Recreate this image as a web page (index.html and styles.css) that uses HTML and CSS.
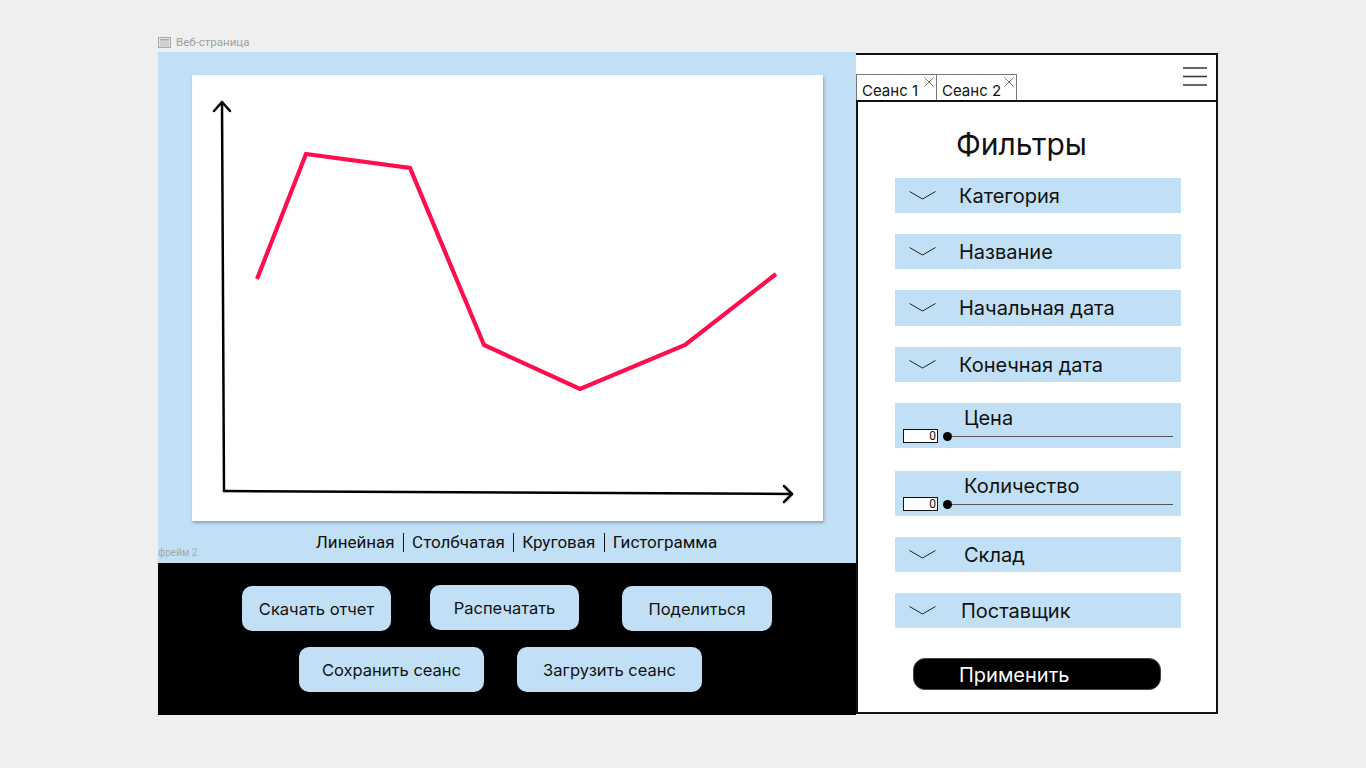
FILE: index.html
```html
<!DOCTYPE html>
<html lang="ru">
<head>
<meta charset="utf-8">
<title>Веб-страница</title>
<link rel="stylesheet" href="styles.css">
</head>
<body>
<div class="canvas">
  <div class="page-label">
    <svg class="page-icon" width="13" height="11" viewBox="0 0 13 11"><rect x="0.5" y="0.5" width="12" height="10" fill="#e4e4e4" stroke="#a8a8a8"/><rect x="2" y="2" width="9" height="1.5" fill="#a8a8a8"/><rect x="2" y="4.5" width="9" height="1" fill="#bdbdbd"/><rect x="2" y="6.5" width="9" height="1" fill="#bdbdbd"/><rect x="2" y="8.3" width="9" height="1" fill="#bdbdbd"/></svg>
    <span>Веб-страница</span>
  </div>
  <div class="layout">
    <div class="frame">
      <div class="chart-area">
        <div class="chart-card">
          <svg class="chart" width="631" height="446" viewBox="0 0 631 446">
            <g fill="none" stroke="#000" stroke-width="2.5" stroke-linecap="round" stroke-linejoin="round">
              <path d="M30 27 L32 416"/>
              <path d="M22 36 L30 27 L38 36"/>
              <path d="M32 416 L600 419"/>
              <path d="M592 411 L600 419 L592 427"/>
            </g>
            <polyline points="65,204 114,79 218,93 292,270 388,314 493,270 584,199" fill="none" stroke="#ff0d4d" stroke-width="4.2" stroke-linejoin="miter"/>
          </svg>
        </div>
        <div class="chart-caption">
          <span class="frame-name">фрейм 2</span>
          <span class="chart-types">Линейная <span class="sep"></span> Столбчатая <span class="sep"></span> Круговая <span class="sep"></span> Гистограмма</span>
        </div>
      </div>
      <div class="actions">
        <div class="actions-row row-one">
          <button class="btn">Скачать отчет</button>
          <button class="btn btn-up">Распечатать</button>
          <button class="btn btn-share">Поделиться</button>
        </div>
        <div class="actions-row row-two">
          <button class="btn btn-wide">Сохранить сеанс</button>
          <button class="btn btn-wide">Загрузить сеанс</button>
        </div>
      </div>
    </div>
    <div class="side">
      <div class="side-head">
        <div class="tabs">
          <div class="tab"><span>Сеанс 1</span><svg class="tab-close" width="10" height="10" viewBox="0 0 10 10"><path d="M0.5 0.5 L9.5 9.5 M9.5 0.5 L0.5 9.5" stroke="#777" stroke-width="1"/></svg></div>
          <div class="tab"><span>Сеанс 2</span><svg class="tab-close" width="10" height="10" viewBox="0 0 10 10"><path d="M0.5 0.5 L9.5 9.5 M9.5 0.5 L0.5 9.5" stroke="#777" stroke-width="1"/></svg></div>
        </div>
        <svg class="burger" width="24" height="20" viewBox="0 0 24 20"><path d="M0 2 H24 M0 10.5 H24 M0 19 H24" stroke="#333" stroke-width="1.5"/></svg>
      </div>
      <div class="filters">
        <h1 class="filters-title">Фильтры</h1>
        <div class="filter-list">
          <div class="filter"><svg class="chev" width="27" height="9" viewBox="0 0 27 9"><path d="M0.5 0.5 L13.5 8 L26.5 0.5" fill="none" stroke="#222" stroke-width="1"/></svg><span>Категория</span></div>
          <div class="filter"><svg class="chev" width="27" height="9" viewBox="0 0 27 9"><path d="M0.5 0.5 L13.5 8 L26.5 0.5" fill="none" stroke="#222" stroke-width="1"/></svg><span>Название</span></div>
          <div class="filter filter-tall"><svg class="chev" width="27" height="9" viewBox="0 0 27 9"><path d="M0.5 0.5 L13.5 8 L26.5 0.5" fill="none" stroke="#222" stroke-width="1"/></svg><span>Начальная дата</span></div>
          <div class="filter"><svg class="chev" width="27" height="9" viewBox="0 0 27 9"><path d="M0.5 0.5 L13.5 8 L26.5 0.5" fill="none" stroke="#222" stroke-width="1"/></svg><span>Конечная дата</span></div>
          <div class="range">
            <span class="range-label">Цена</span>
            <div class="range-control"><span class="range-input">0</span><span class="range-track"><span class="range-dot"></span></span></div>
          </div>
          <div class="range range-second">
            <span class="range-label">Количество</span>
            <div class="range-control"><span class="range-input">0</span><span class="range-track"><span class="range-dot"></span></span></div>
          </div>
          <div class="filter"><svg class="chev" width="27" height="9" viewBox="0 0 27 9"><path d="M0.5 0.5 L13.5 8 L26.5 0.5" fill="none" stroke="#222" stroke-width="1"/></svg><span class="shift">Склад</span></div>
          <div class="filter"><svg class="chev" width="27" height="9" viewBox="0 0 27 9"><path d="M0.5 0.5 L13.5 8 L26.5 0.5" fill="none" stroke="#222" stroke-width="1"/></svg><span class="shift-sm">Поставщик</span></div>
        </div>
        <button class="apply">Применить</button>
      </div>
    </div>
  </div>
</div>
</body>
</html>
```

FILE: styles.css
```css
* { box-sizing: border-box; }
html, body { margin: 0; padding: 0; }
body {
  background: #efefef;
  width: 1366px;
  height: 768px;
  overflow: hidden;
  font-family: Inter, "Noto Sans", sans-serif;
}
.canvas {
  padding: 34px 0 0 158px;
}
.page-label {
  height: 18px;
  display: flex;
  align-items: center;
  gap: 5px;
  color: #a0a0a0;
  font-family: Roboto, sans-serif;
  font-size: 11.5px;
  padding-bottom: 2px;
}
.page-icon { display: block; }
.layout {
  display: flex;
  align-items: flex-start;
}
.frame {
  width: 698px;
  display: flex;
  flex-direction: column;
}
.chart-area {
  background: #c2e0f5;
  height: 511px;
  padding: 23px 33px 0 34px;
  display: flex;
  flex-direction: column;
}
.chart-card {
  width: 631px;
  height: 446px;
  background: #fff;
  box-shadow: 1px 2px 3px rgba(0, 0, 0, 0.28);
}
.chart { display: block; }
.chart-caption {
  position: relative;
  flex: 1;
  display: flex;
  align-items: center;
  justify-content: center;
  padding-left: 18px;
}
.chart-types {
  font-family: Roboto, sans-serif;
  font-size: 17px;
  color: #111;
  display: flex;
  align-items: center;
  gap: 4px;
  white-space: pre;
}
.sep {
  display: inline-block;
  width: 1px;
  height: 19px;
  background: #111;
}
.frame-name {
  position: absolute;
  left: -34px;
  top: 26px;
  font-family: Roboto, sans-serif;
  font-size: 10px;
  color: #a7a7a7;
}
.actions {
  background: #000;
  height: 152px;
  padding-top: 23px;
  display: flex;
  flex-direction: column;
  gap: 16px;
}
.actions-row {
  display: flex;
  justify-content: center;
}
.row-one { gap: 39px; }
.row-two { gap: 33px; padding-right: 13px; }
.btn {
  width: 149px;
  height: 45px;
  border: none;
  border-radius: 10px;
  background: #c2e0f5;
  color: #111;
  font-family: Inter, sans-serif;
  font-size: 16.5px;
  padding: 0;
}
.btn-up { position: relative; top: -1px; }
.btn-share { width: 150px; margin-left: 4px; }
.btn-wide { width: 185px; }
.side {
  width: 362px;
  margin-top: 1px;
  display: flex;
  flex-direction: column;
}
.side-head {
  height: 47px;
  background: #fff;
  border-top: 2px solid #111;
  border-right: 2px solid #111;
  display: flex;
  align-items: flex-end;
  justify-content: space-between;
  position: relative;
}
.tabs {
  display: flex;
}
.tab {
  position: relative;
  width: 81px;
  height: 26px;
  border: 1px solid #777;
  border-bottom: none;
  margin-right: -1px;
  font-size: 15px;
  color: #111;
  padding: 7px 0 0 5px;
  line-height: 18px;
}
.tab-close {
  position: absolute;
  right: 2px;
  top: 2px;
}
.burger {
  position: absolute;
  right: 9px;
  top: 11px;
}
.filters {
  height: 614px;
  border: 2px solid #111;
  background: #fff;
  padding-top: 26px;
}
.filters-title {
  margin: 0 0 17px 98px;
  font-weight: 400;
  font-size: 30px;
  line-height: 33px;
  color: #111;
}
.filter-list {
  margin-left: 37px;
  width: 286px;
  display: flex;
  flex-direction: column;
  gap: 21px;
}
.filter {
  height: 35px;
  background: #c2e0f5;
  display: flex;
  align-items: center;
  padding-left: 14px;
  font-size: 20px;
  color: #111;
}
.filter-tall { height: 36px; }
.chev {
  display: block;
  margin-right: 23px;
  margin-top: -1px;
}
.shift { margin-left: 5px; }
.shift-sm { margin-left: 2px; }
.range {
  height: 45px;
  background: #c2e0f5;
  padding: 3px 8px 0 8px;
  color: #111;
}
.range-second { margin-top: 2px; }
.range-label {
  display: block;
  margin-left: 61px;
  font-size: 20px;
  line-height: 24px;
}
.range-control {
  display: flex;
  align-items: center;
  margin-top: -1px;
}
.range-input {
  width: 35px;
  height: 14px;
  border: 1px solid #111;
  background: #fff;
  font-family: Roboto, sans-serif;
  font-size: 12px;
  line-height: 12px;
  text-align: right;
  padding-right: 1px;
}
.range-track {
  position: relative;
  flex: 1;
  height: 1px;
  background: #555;
  margin-left: 10px;
}
.range-dot {
  position: absolute;
  left: -5px;
  top: -4px;
  width: 9px;
  height: 9px;
  border-radius: 50%;
  background: #000;
}
.apply {
  display: block;
  margin: 30px 0 0 55px;
  width: 248px;
  height: 32px;
  background: #000;
  color: #fff;
  border: 1px solid #444;
  border-radius: 12px;
  font-family: Inter, sans-serif;
  font-size: 20px;
  text-align: left;
  padding: 1px 0 0 45px;
}
```
